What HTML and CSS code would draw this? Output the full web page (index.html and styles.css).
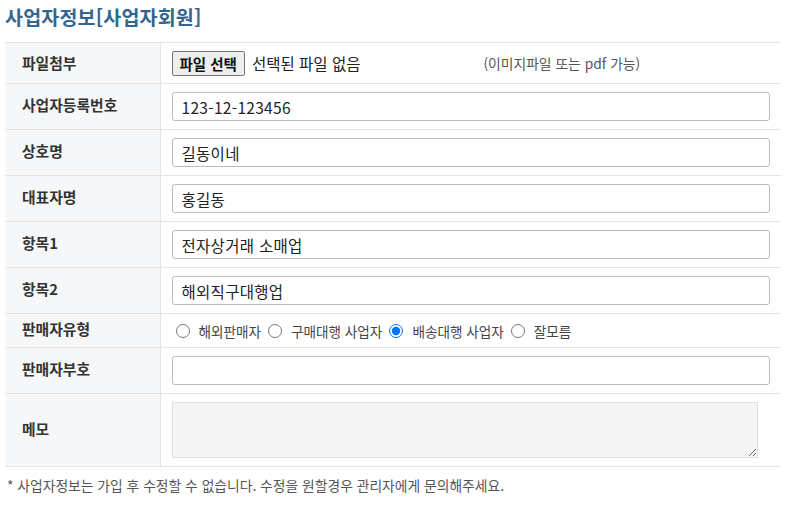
FILE: index.html
```html
<!DOCTYPE html>
<html lang="ko">
<head>
<meta charset="utf-8">
<link rel="stylesheet" href="styles.css">
</head>
<body>
<div class="wrap">
  <h2 class="title">사업자정보[사업자회원]</h2>
  <table class="form">
    <tr class="r-file">
      <th>파일첨부</th>
      <td>
        <div class="filerow">
          <button class="filebtn" type="button">파일 선택</button>
          <span class="nofile">선택된 파일 없음</span>
          <span class="hint">(이미지파일 또는 pdf 가능)</span>
        </div>
      </td>
    </tr>
    <tr><th>사업자등록번호</th><td><input class="txt" type="text" value="123-12-123456"></td></tr>
    <tr><th>상호명</th><td><input class="txt" type="text" value="길동이네"></td></tr>
    <tr><th>대표자명</th><td><input class="txt" type="text" value="홍길동"></td></tr>
    <tr><th>항목1</th><td><input class="txt" type="text" value="전자상거래 소매업"></td></tr>
    <tr><th>항목2</th><td><input class="txt" type="text" value="해외직구대행업"></td></tr>
    <tr class="r-radio">
      <th>판매자유형</th>
      <td>
        <div class="radios">
          <label><input type="radio" name="t">해외판매자</label>
          <label><input type="radio" name="t">구매대행 사업자</label>
          <label><input type="radio" name="t" checked>배송대행 사업자</label>
          <label><input type="radio" name="t">잘모름</label>
        </div>
      </td>
    </tr>
    <tr><th>판매자부호</th><td><input class="txt" type="text" value=""></td></tr>
    <tr class="r-memo"><th>메모</th><td><textarea class="memo"></textarea></td></tr>
  </table>
  <p class="note">* 사업자정보는 가입 후 수정할 수 없습니다. 수정을 원할경우 관리자에게 문의해주세요.</p>
</div>
</body>
</html>
```
FILE: styles.css
```css
* { box-sizing: border-box; }
body {
  margin: 0;
  background: #fff;
  font-family: "Noto Sans CJK KR", "Noto Sans", sans-serif;
  color: #333;
}
.wrap { padding: 0 9px 0 5px; }
.title {
  margin: 0;
  padding: 2px 0 0 0;
  height: 42px;
  font-size: 19.5px;
  font-weight: 700;
  color: #33658f;
  letter-spacing: 0.2px;
}
.form {
  width: 776px;
  border-collapse: collapse;
  border-top: 1px solid #e4e4e4;
}
.form th, .form td {
  border-bottom: 1px solid #e4e4e4;
  height: 46px;
  padding: 0;
  vertical-align: middle;
}
.form th {
  width: 155px;
  background: #f5f7f8;
  border-right: 1px solid #e4e4e4;
  text-align: left;
  padding-left: 17px;
  padding-bottom: 4px;
  font-size: 14.8px;
  font-weight: 700;
  color: #333;
}
.form td { padding: 0 11px 0 11px; }
.r-file th { padding-bottom: 2px; }
.r-file th, .r-file td { height: 41px; }
.r-radio th, .r-radio td { height: 34px; }
.r-memo th, .r-memo td { height: 73px; }
.filerow {
  display: flex;
  align-items: center;
  font-size: 15.5px;
  color: #222;
}
.filebtn {
  font-family: inherit;
  font-size: 14.5px;
  font-weight: 700;
  color: #111;
  background: #efefef;
  border: 1px solid #767676;
  border-radius: 2px;
  height: 25px;
  padding: 0 7px;
  margin-right: 7px;
}
.hint {
  margin-left: 123px;
  font-size: 13.8px;
  color: #555;
}
.txt {
  display: block;
  width: 598px;
  height: 29px;
  border: 1px solid #b9bcc0;
  border-radius: 3px;
  padding: 0 9px;
  font-family: inherit;
  font-size: 15.5px;
  letter-spacing: 0.3px;
  color: #222;
}
.radios {
  display: flex;
  align-items: center;
  font-size: 13.6px;
  color: #444;
}
.radios label {
  display: flex;
  align-items: center;
  margin-right: 3px;
}
.radios input {
  margin: 0 9px 0 4px;
  width: 14px;
  height: 14px;
}
.memo {
  display: block;
  width: 586px;
  height: 56px;
  border: 1px solid #e0e0e0;
  background: #f5f5f5;
  resize: vertical;
}
.note {
  margin: 8px 0 0 2px;
  font-size: 13.8px;
  color: #555;
}
```
